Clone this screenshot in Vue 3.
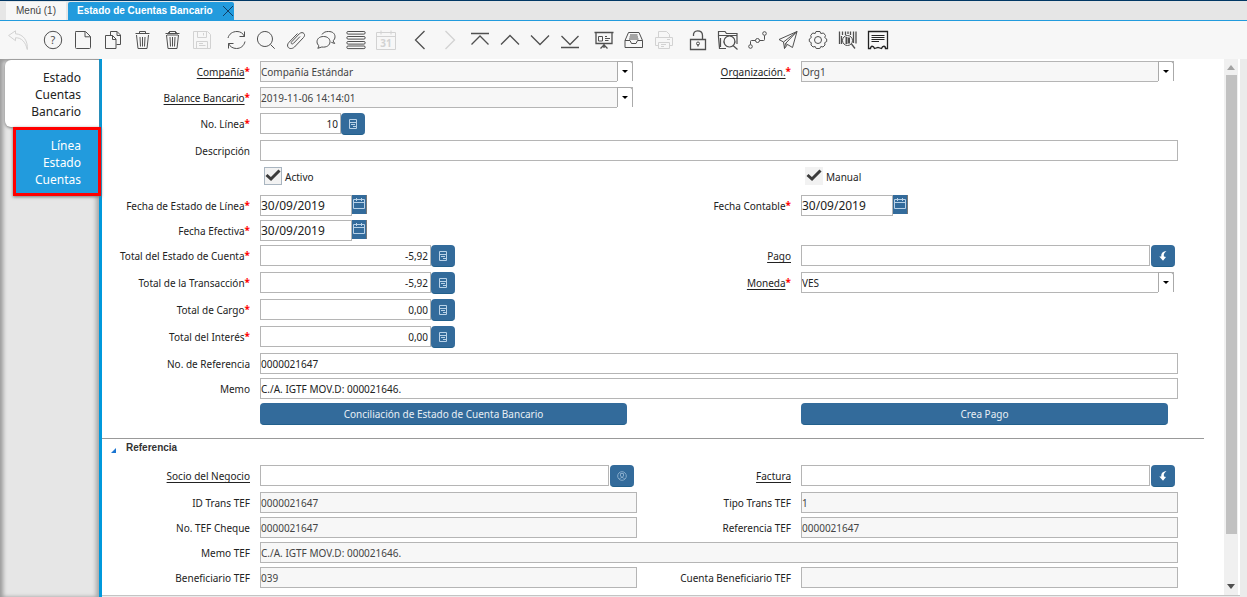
<script setup>
import { ref } from 'vue'

const toolbar = [
  [{ id: 'undo', title: 'Deshacer', off: true }],
  [
    { id: 'help', title: 'Ayuda' },
    { id: 'new', title: 'Nuevo' },
    { id: 'copy', title: 'Copiar' },
    { id: 'delete', title: 'Eliminar' },
    { id: 'deleteAll', title: 'Eliminar selección' },
    { id: 'save', title: 'Guardar', off: true },
  ],
  [
    { id: 'refresh', title: 'Refrescar' },
    { id: 'find', title: 'Buscar' },
    { id: 'attach', title: 'Anexo' },
    { id: 'chat', title: 'Chat' },
    { id: 'grid', title: 'Cambiar vista' },
    { id: 'history', title: 'Historial', off: true },
  ],
  [
    { id: 'prev', title: 'Registro padre' },
    { id: 'next', title: 'Registro detalle', off: true },
    { id: 'first', title: 'Primero' },
    { id: 'up', title: 'Anterior' },
    { id: 'down', title: 'Siguiente' },
    { id: 'last', title: 'Último' },
  ],
  [
    { id: 'report', title: 'Informe' },
    { id: 'archive', title: 'Archivo' },
    { id: 'print', title: 'Imprimir', off: true },
  ],
  [
    { id: 'lock', title: 'Bloquear' },
    { id: 'zoom', title: 'Visor' },
    { id: 'workflow', title: 'Flujo de trabajo' },
    { id: 'request', title: 'Solicitud' },
    { id: 'process', title: 'Proceso' },
    { id: 'product', title: 'Info producto' },
    { id: 'ticket', title: 'Exportar' },
  ],
]

const main = ref([
  { id: 'client', row: 'r26', type: 'combo', label: 'Compañía', link: true, req: true, ro: true, value: 'Compañía Estándar' },
  { id: 'org', row: 'r26', type: 'combo', right: true, label: 'Organización.', link: true, req: true, ro: true, value: 'Org1' },
  { id: 'balance', row: 'r26', type: 'combo', label: 'Balance Bancario', link: true, req: true, ro: true, value: '2019-11-06 14:14:01' },
  { id: 'line', row: 'r27', type: 'number', size: 'short', label: 'No. Línea', req: true, value: '10' },
  { id: 'description', row: 'r27', type: 'text', wide: true, label: 'Descripción', value: '' },
  { id: 'active', row: 'r28', type: 'check', label: 'Activo', box: 'framed', value: true },
  { id: 'manual', row: 'r28', type: 'check', right: true, label: 'Manual', box: 'plain', value: true },
  { id: 'lineDate', row: 'r25', type: 'date', label: 'Fecha de Estado de Línea', req: true, value: '30/09/2019' },
  { id: 'acctDate', row: 'r25', type: 'date', right: true, label: 'Fecha Contable', req: true, value: '30/09/2019' },
  { id: 'valueDate', row: 'r25', type: 'date', label: 'Fecha Efectiva', req: true, value: '30/09/2019' },
  { id: 'stmtAmt', row: 'r27', type: 'number', size: 'long', label: 'Total del Estado de Cuenta', req: true, value: '-5,92' },
  { id: 'payment', row: 'r27', type: 'lookup', right: true, label: 'Pago', link: true, icon: 'arrow', value: '' },
  { id: 'trxAmt', row: 'r27', type: 'number', size: 'long', label: 'Total de la Transacción', req: true, value: '-5,92' },
  { id: 'currency', row: 'r27', type: 'combo', right: true, label: 'Moneda', link: true, req: true, value: 'VES' },
  { id: 'chargeAmt', row: 'r27', type: 'number', size: 'long', label: 'Total de Cargo', req: true, value: '0,00' },
  { id: 'interestAmt', row: 'r27', type: 'number', size: 'long', label: 'Total del Interés', req: true, value: '0,00' },
  { id: 'refNo', row: 'r25', type: 'text', wide: true, label: 'No. de Referencia', value: '0000021647' },
  { id: 'memo', row: 'r25', type: 'text', wide: true, label: 'Memo', value: 'C./A. IGTF MOV.D: 000021646.' },
  { id: 'match', row: 'r35', type: 'action', label: 'Conciliación de Estado de Cuenta Bancario' },
  { id: 'createPay', row: 'r35', type: 'action', right: true, label: 'Crea Pago' },
])

const reference = ref([
  { id: 'partner', row: 'r27', type: 'lookup', label: 'Socio del Negocio', link: true, icon: 'person', value: '' },
  { id: 'invoice', row: 'r27', type: 'lookup', right: true, label: 'Factura', link: true, icon: 'arrow', value: '' },
  { id: 'eftTrx', row: 'r25', type: 'text', label: 'ID Trans TEF', ro: true, value: '0000021647' },
  { id: 'eftType', row: 'r25', type: 'text', right: true, label: 'Tipo Trans TEF', ro: true, value: '1' },
  { id: 'eftCheck', row: 'r25', type: 'text', label: 'No. TEF Cheque', ro: true, value: '0000021647' },
  { id: 'eftRef', row: 'r25', type: 'text', right: true, label: 'Referencia TEF', ro: true, value: '0000021647' },
  { id: 'eftMemo', row: 'r25', type: 'text', wide: true, label: 'Memo TEF', ro: true, value: 'C./A. IGTF MOV.D: 000021646.' },
  { id: 'eftPayee', row: 'r25', type: 'text', label: 'Beneficiario TEF', ro: true, value: '039' },
  { id: 'eftAccount', row: 'r25', type: 'text', right: true, label: 'Cuenta Beneficiario TEF', ro: true, value: '' },
])

const sections = [
  { id: 'main', fields: main },
  { id: 'reference', title: 'Referencia', fields: reference },
]
</script>

<template>
  <div class="app">
    <nav class="tabs">
      <button class="tab" type="button">Menú (1)</button>
      <div class="tab current">
        <button class="tab-name" type="button">Estado de Cuentas Bancario</button>
        <button class="close" type="button" aria-label="Cerrar">
          <svg width="12" height="12" viewBox="0 0 12 12"><path d="M1 1 L11 11 M11 1 L1 11" /></svg>
        </button>
      </div>
    </nav>

    <div class="toolbar" role="toolbar">
      <div v-for="(group, g) in toolbar" :key="g" class="group">
        <button v-for="t in group" :key="t.id" class="tool" :class="{ off: t.off }" type="button" :title="t.title" :aria-label="t.title" :disabled="t.off">
          <svg width="20" height="20" viewBox="0 0 20 20">
            <path v-if="t.id === 'undo'" d="M7.5 .8 L.6 5.5 L7.5 10.7 V7.8 C13.500 7.500 17.500 12 19.300 19.500 C20 11 15.500 4.200 7.500 3.800 Z" />
            <g v-else-if="t.id === 'help'">
              <circle cx="11" cy="10" r="8.700" />
              <text x="11" y="14" font-size="11" text-anchor="middle">?</text>
            </g>
            <path v-else-if="t.id === 'new'" d="M3.500 1.500 H13.500 L18.500 6.500 V17.500 Q18.500 18.500 17.500 18.500 H4.500 Q3.500 18.500 3.500 17.500 V2.500 Q3.500 1.500 4.500 1.500 M13 1.800 V6.800 H18.300" />
            <path v-else-if="t.id === 'copy'" d="M8.500 5 V1.500 H15 L18.500 5 V14.500 H14.500 M15 1.500 V5.500 H18.500 M3.500 5.500 H10.500 L14 9 V18.500 H3.500 Z M10.500 5.500 V9.500 H14" />
            <g v-else-if="t.id === 'delete' || t.id === 'deleteAll'">
              <path d="M3.500 3.500 H17.500 M7.500 3.500 V1.500 H13.500 V3.500 M4.500 5 L6 18.500 H15 L16.500 5 M8 7 L8.500 16.500 M10.500 7 V16.500 M13 7 L12.500 16.500" />
              <path v-if="t.id === 'deleteAll'" d="M5 5 H16 M6 3 L8 1.500 M13 1.500 L15.500 3.500" />
            </g>
            <path v-else-if="t.id === 'save'" d="M1.500 1.500 H15.500 L18.500 4.500 V18.500 H1.500 Z M5.500 1.500 V7.500 H14.500 V1.500 M11.500 3 V5.500 M4.500 18.500 V11.500 H15.500 V18.500 M7 13.500 H11 M7 15.500 H13.500" />
            <path v-else-if="t.id === 'refresh'" d="M2 8 C3 4 6.500 1.500 11 1.500 C14.500 1.500 17 3.300 18.500 6.500 M18.500 1.500 V6.500 H13.500 M19 11.500 C18 16 14.500 18.500 10.500 18.500 C7 18.500 4 16.800 2.500 13.500 M2.500 18.500 V13.500 H7.500" />
            <path v-else-if="t.id === 'find'" d="M9 1.500 A7.500 7.500 0 1 1 8.900 1.500 M14.500 14.500 L18.700 18.700" />
            <path v-else-if="t.id === 'attach'" d="M14 6.500 L7.500 13.300 C6 14.800 4.300 13.300 5.700 11.800 L13.300 3.800 C16.500 .700 20.500 4.300 17.500 7.500 L8.500 17 C4 21 -1 16.500 3 12.300 L11.500 3.500" />
            <path v-else-if="t.id === 'chat'" d="M7.500 6.500 C3.500 6.500 1 8.800 1 11.800 C1 13.500 1.800 14.800 3 15.800 L1.800 18.300 L5.800 17 C10.500 17.700 14 15.300 14 11.800 C14 8.800 11.500 6.500 7.500 6.500 M6 4.500 C7.500 2 10 1.500 12.500 1.500 C16.500 1.500 19 3.500 19 6.800 C19 8.500 18.300 9.800 17 10.800 L18.700 13.500 L15.300 12.300" />
            <g v-else-if="t.id === 'grid'">
              <rect v-for="y in [1.5, 6.5, 11.5, 16]" :key="y" x=".8" :y="y" width="18.400" height="2.600" rx="1.300" />
            </g>
            <g v-else-if="t.id === 'history'">
              <path d="M.5 2.500 H19.500 V19.500 H.5 Z M.5 6.500 H19.500 M5 .500 V4.500 M15 .500 V4.500" />
              <text x="10" y="17" font-size="10" font-weight="bold" text-anchor="middle">31</text>
            </g>
            <path v-else-if="t.id === 'prev'" class="bold" d="M14.500 1 L5.500 10 L14.500 19" />
            <path v-else-if="t.id === 'next'" class="bold" d="M5.500 1 L14.500 10 L5.500 19" />
            <path v-else-if="t.id === 'first'" class="bold" d="M1 3.500 H19 M1.500 14.500 L10 6 L18.500 14.500" />
            <path v-else-if="t.id === 'up'" class="bold" d="M1 14.500 L10 5.500 L19 14.500" />
            <path v-else-if="t.id === 'down'" class="bold" d="M1 5.500 L10 14.500 L19 5.500" />
            <path v-else-if="t.id === 'last'" class="bold" d="M1.500 6 L10 14.500 L18.500 6 M1 17.500 H19" />
            <g v-else-if="t.id === 'report'">
              <path class="bold" d="M.5 2.500 H19.500 M2 3 V13.500 H18 V3 M10 14 V18 M6.500 18.500 L10 15 L13.500 18.500" />
              <path d="M4.500 6.500 H8.500 V11 H4.500 Z M11 6.500 H13 M11 8.500 H16 M11 10.500 H14.500" />
            </g>
            <path v-else-if="t.id === 'archive'" d="M1 10.500 L4.500 2.500 H15 L18.500 10.500 V17.500 H1 Z M1 10.500 H6 L7.500 13.500 H12 L13.500 10.500 H18.500 M6 5 H13.500 M5.500 7 H14 M5 9 H14.500" />
            <path v-else-if="t.id === 'print'" d="M4.500 7 V1.500 H12.500 L15.500 4.500 V7 M4 15.500 H1.500 V7.500 H18.500 V15.500 H16 M4.500 12.500 H15.500 V18.500 H4.500 Z M7 14.500 H12 M7 16.500 H10 M13 9.500 H16" />
            <g v-else-if="t.id === 'lock'">
              <path d="M2.500 9.500 H17.500 V19.500 H2.500 Z M5.500 6 C5 2.500 7 .800 9.500 .800 C12.500 .800 14.500 2.500 14.500 5.500 V9.500 M10 14 V16.500" stroke-width="1.300" />
              <circle cx="10" cy="13.500" r="1.500" />
            </g>
            <path v-else-if="t.id === 'zoom'" stroke-width="1.200" d="M8 18.500 H1.500 L.500 7 V1.500 H7 L8.500 3.500 H19 V14 M.500 5.500 H19 M11.500 6 A5.500 5.500 0 1 1 11.400 6 M15 15.500 L19.500 19.500 M2.500 8 V17" />
            <g v-else-if="t.id === 'workflow'">
              <circle cx="2.500" cy="16.500" r="1.800" /><circle cx="9.500" cy="10.500" r="2" /><circle cx="16.500" cy="3.500" r="1.800" />
              <path d="M2.500 14.500 V11.500 Q2.500 10.500 3.500 10.500 H7.500 M11.500 10.500 H15.500 Q16.500 10.500 16.500 9.500 V5.500" />
            </g>
            <path v-else-if="t.id === 'request'" d="M19 1.500 L1 9.500 L5.500 12 L6.500 18.500 L9.500 14.500 L14.500 17.500 Z M19 1.500 L5.500 12 M19 1.500 L7.500 13.500 L6.500 18.500 M7.500 13.500 L9.500 14.500" />
            <g v-else-if="t.id === 'process'">
              <path d="M8 1.500 H12 L12.800 3.500 L15.500 3 L17.500 5.500 L16.700 7.500 L18.700 9 V11.500 L16.700 12.700 L17 15 L15 17 L12.800 16.500 L11.800 18.500 H8.200 L7.200 16.500 L5 17 L3 15 L3.300 12.700 L1.300 11.500 V9 L3.300 7.500 L2.700 5.500 L4.700 3 L7.200 3.500 Z" stroke-linejoin="round" />
              <circle cx="10" cy="10" r="3.500" />
            </g>
            <g v-else-if="t.id === 'product'">
              <path class="bold" d="M1.500 1.500 V14 M4.500 1.500 V5 M7.500 1.500 V5 M10 1.500 V4 M12.500 1.500 V5 M15.500 1.500 V13 M18 1.500 V13.500 M3.500 6 V14 M13.500 14 L17 18.500" />
              <path class="heavy" d="M8.500 7 V14 M11 7.500 V13.500" />
              <circle cx="9.500" cy="10.500" r="5" />
            </g>
            <g v-else class="dark">
              <path class="bold" d="M.5 18.500 V1.500 H19.500 V18.500 H17.500 C17.500 15.500 14.500 15.500 13.500 18.500 L10 17.500 L6.500 18.500 C5.500 15.500 2.500 15.500 2.500 18.500 Z" />
              <path d="M3.500 5.500 H16.500 M3.500 7.500 H16.500 M3.500 9.500 H16.500 M3.500 11.500 H11" />
            </g>
          </svg>
        </button>
      </div>
    </div>

    <div class="body">
      <aside class="side">
        <button class="side-tab" type="button">Estado<br />Cuentas<br />Bancario</button>
        <button class="side-tab selected" type="button">Línea<br />Estado<br />Cuentas</button>
      </aside>

      <main class="panel">
        <form class="form" @submit.prevent>
          <section v-for="s in sections" :key="s.id">
            <h2 v-if="s.title" class="heading">
              <svg width="5" height="5" viewBox="0 0 5 5"><path d="M5 0 V5 H0 Z" /></svg>{{ s.title }}
            </h2>
            <div class="fields">
              <div v-for="f in s.fields.value" :key="f.id" class="field" :class="[f.row, { right: f.right, wide: f.wide }]">
                <div class="caption">
                  <label v-if="f.type !== 'check' && f.type !== 'action'" :for="f.id"><span :class="{ link: f.link }">{{ f.label }}</span><b v-if="f.req" class="req">*</b></label>
                </div>

                <div v-if="f.type === 'combo'" class="combo">
                  <select :id="f.id" v-model="f.value" :class="{ ro: f.ro }">
                    <option>{{ f.value }}</option>
                  </select>
                  <span class="arrow"><svg width="6" height="3" viewBox="0 0 6 3"><path d="M0 0 H6 L3 3 Z" /></svg></span>
                </div>

                <div v-else-if="f.type === 'number'" class="number" :class="f.size">
                  <input :id="f.id" v-model="f.value" type="text" />
                  <button class="blue" type="button" aria-label="Calculadora">
                    <svg width="8" height="10" viewBox="0 0 8 10"><path d="M.5 .5 H7.500 V9.500 H.5 Z M.5 3.500 H7.500 M2 5.500 H6 M4 7.500 H7" /></svg>
                  </button>
                </div>

                <div v-else-if="f.type === 'date'" class="date">
                  <input :id="f.id" v-model="f.value" type="text" />
                  <button type="button" aria-label="Calendario">
                    <svg width="12" height="12" viewBox="0 0 12 12"><path d="M.5 1.500 H11.500 V10.500 H.5 Z M.5 4.500 H11.500 M3.500 0 V3 M8.500 0 V3" /></svg>
                  </button>
                </div>

                <div v-else-if="f.type === 'lookup'" class="lookup">
                  <input :id="f.id" v-model="f.value" type="text" />
                  <button class="blue" type="button" :aria-label="'Buscar ' + f.label">
                    <svg v-if="f.icon === 'arrow'" class="solid" width="8" height="10" viewBox="0 0 8 10"><path d="M7.500 .2 C3.500 .2 2 2.500 2.300 5.500 L.3 5.500 L4 9.800 L7 6 L5 5.500 C4.300 3 5.500 1.500 7.500 .2 Z" /></svg>
                    <svg v-else class="faint" width="10" height="10" viewBox="0 0 10 10"><circle cx="5" cy="5" r="4.300" /><path d="M3.500 2.500 H6.500 V5 L5.500 6 H4.500 L3.500 5 Z M2.500 8 L4 6.500 H6 L7.500 8" /></svg>
                  </button>
                </div>

                <label v-else-if="f.type === 'check'" class="check" :class="f.box">
                  <span class="tick">
                    <input v-model="f.value" type="checkbox" />
                    <svg v-if="f.value" width="16" height="14" viewBox="0 0 16 14"><path d="M1.500 6 L6 10 L14.500 1.500" /></svg>
                  </span>
                  <span class="check-name">{{ f.label }}</span>
                </label>

                <button v-else-if="f.type === 'action'" class="blue action" type="button">{{ f.label }}</button>

                <input v-else :id="f.id" v-model="f.value" class="text" :class="{ ro: f.ro }" type="text" :readonly="f.ro" />
              </div>
            </div>
          </section>
        </form>

        <div class="scroll">
          <svg width="8" height="5" viewBox="0 0 8 5"><path d="M0 5 L4 0 L8 5 Z" fill="#a3a3a3" /></svg>
          <div class="track"><div class="thumb"></div></div>
          <svg width="8" height="5" viewBox="0 0 8 5"><path d="M0 0 H8 L4 5 Z" fill="#505050" /></svg>
        </div>
      </main>
    </div>
  </div>
</template>

<style>
body {
  background: #ebebeb;
}
</style>

<style scoped>
* {
  box-sizing: border-box;
}
.app {
  display: flex;
  flex-direction: column;
  height: 100vh;
  overflow: hidden;
  font: 10px/14px "Noto Sans", sans-serif;
  color: #222;
}
button {
  margin: 0;
  padding: 0;
  border: 0;
  font: inherit;
  color: inherit;
  background: none;
}
svg {
  display: block;
  flex: none;
}

.tabs {
  display: flex;
  flex: none;
  gap: 2px;
  height: 21px;
  padding-left: 6px;
  border-top: 1px solid #003764;
  border-bottom: 1px solid #229bdd;
  background: #e6e6e6;
  font-family: "Liberation Sans", sans-serif;
}
.tab {
  display: flex;
  align-items: center;
  margin-top: 1px;
  padding: 0 10px;
  background: #f7f7f7;
  color: #444;
}
.current {
  gap: 9px;
  padding: 0 0 0 9px;
  border-radius: 2px 2px 0 0;
  background: #229bdd;
  color: #fff;
  font-weight: bold;
}
.close path {
  stroke: #123f66;
  fill: none;
}

.toolbar {
  display: flex;
  flex: none;
  align-items: center;
  gap: 14px;
  height: 38px;
  padding-left: 8px;
  background: #f7f7f7;
}
.group {
  display: flex;
  gap: 10px;
}
.tool {
  width: 20px;
  height: 20px;
}
.tool svg {
  overflow: visible;
  fill: none;
  stroke: #505050;
}
.tool text {
  fill: #505050;
  stroke: none;
}
.tool .bold {
  stroke-width: 1.300;
}
.tool .heavy {
  stroke-width: 2;
}
.tool .dark {
  stroke: #222;
}
.off svg {
  stroke: #d2d2d2;
}
.off text {
  fill: #d2d2d2;
}

.body {
  display: flex;
  flex: 1;
  min-height: 0;
}
.side {
  flex: none;
  width: 102px;
  padding: 1px 0 0 5px;
  border-right: 3px solid #0099dc;
  background: #e6e6e6;
  box-shadow: inset 3px 2px 4px #999, inset -3px 0 4px #aaa;
}
.side-tab {
  display: block;
  width: 94px;
  height: 67px;
  padding: 2px 18px 0 0;
  border-radius: 6px 0 0 6px;
  background: #fff;
  box-shadow: 0 1px 3px #777;
  color: #222;
  font-size: 12px;
  line-height: 17px;
  text-align: right;
}
.selected {
  position: relative;
  width: 88px;
  height: 69px;
  margin-left: 8px;
  padding-right: 17px;
  border: 3px solid #f00;
  border-radius: 0;
  background: #229bdd;
  color: #fff;
}

.panel {
  display: flex;
  flex: 1;
  min-width: 0;
  margin: 0 7px 1px 0;
  border-bottom: 1px solid #c4c4c4;
  background: #fff;
}
.form {
  flex: 1;
  min-width: 0;
  margin-right: 20px;
  padding-top: 2px;
}
.fields {
  display: grid;
  grid-template-columns: minmax(0, 535fr) minmax(0, 541fr);
  padding-right: 26px;
}
.field {
  display: grid;
  grid-column: 1;
  grid-template-columns: minmax(0, 158fr) minmax(0, 377fr);
  align-items: start;
}
.right {
  grid-column: 2;
  grid-template-columns: minmax(0, 164fr) minmax(0, 377fr);
}
.wide {
  grid-column: 1 / 3;
  grid-template-columns: minmax(0, 158fr) minmax(0, 918fr);
}
.r25 { height: 25px; }
.r26 { height: 26px; }
.r27 { height: 27px; }
.r28 { height: 28px; }
.r35 { height: 35px; }

.caption {
  padding: 4px 10px 0 0;
  text-align: right;
  white-space: nowrap;
}
.link {
  text-decoration: underline;
  text-underline-offset: 2px;
}
.req {
  color: #f00;
  line-height: 10px;
  vertical-align: 1px;
}

input,
select {
  display: block;
  min-width: 0;
  width: 100%;
  height: 21px;
  margin: 0;
  padding: 0;
  border: 1px solid #b5b5b5;
  border-radius: 0;
  outline: 0;
  background: #fff;
  color: #222;
  font: inherit;
}
select {
  appearance: none;
}
.ro {
  background: #f7f7f7;
  color: #444;
}
.combo {
  position: relative;
  margin-right: 4px;
}
.arrow {
  position: absolute;
  top: 0;
  right: 0;
  display: flex;
  align-items: center;
  justify-content: center;
  width: 16px;
  height: 20px;
  border: 1px solid #aaa;
  border-bottom: 0;
  border-radius: 0 3px 0 0;
  background: #fff;
  box-shadow: 0 1px #fff;
  pointer-events: none;
}
.number,
.date,
.lookup {
  display: flex;
}
.number {
  width: 195px;
}
.short {
  width: 105px;
}
.number input {
  flex: 1;
  padding-right: 2px;
  text-align: right;
}
.date {
  width: 107px;
}
.date input {
  flex: 1;
  font-size: 12px;
}
.date button {
  display: flex;
  justify-content: center;
  width: 15px;
  height: 19px;
  padding-top: 3px;
  border-right: 1px solid #777;
  background: #336b9b;
}
.lookup {
  gap: 1px;
  margin-right: 3px;
}
.blue {
  display: flex;
  flex: none;
  align-items: center;
  justify-content: center;
  width: 24px;
  height: 22px;
  border-bottom: 1px solid #22608c;
  border-radius: 4px;
  background: #336b9b;
  color: #e8eff5;
}
.blue svg,
.date svg {
  fill: none;
  stroke: #b9d2e8;
}
.blue .faint {
  stroke: #86abcb;
}
.blue .solid {
  fill: #fff;
  stroke: none;
}
.action {
  width: auto;
  margin-right: 10px;
}
.check {
  display: flex;
  align-items: center;
  gap: 3px;
  height: 18px;
  padding-left: 4px;
}
.check-name {
  padding-top: 2px;
}
.tick {
  display: grid;
  place-items: center;
}
.tick > * {
  grid-area: 1 / 1;
}
.check input {
  width: 18px;
  height: 18px;
  border-color: #a9b5c0;
  appearance: none;
  background: #f2f2f2;
}
.plain input {
  border-color: #f2f2f2;
}
.tick svg {
  position: relative;
  fill: none;
  stroke: #3c3c3c;
  stroke-width: 3;
  pointer-events: none;
}
.heading {
  display: flex;
  align-items: center;
  gap: 10px;
  height: 27px;
  margin: 0;
  padding: 0 0 8px 9px;
  border-top: 1px solid #999;
  color: #333;
  font: bold 10px/14px "Liberation Sans", sans-serif;
}
.heading svg {
  margin-top: 4px;
}
.heading path {
  fill: #1a75d1;
}
.scroll {
  display: flex;
  flex: none;
  flex-direction: column;
  align-items: center;
  gap: 5px;
  width: 14px;
  margin-right: 2px;
  padding: 6px 0;
  background: #f0f0f0;
}
.track {
  flex: 1;
  width: 11px;
}
.thumb {
  height: 91%;
  background: #c1c1c1;
}
</style>
